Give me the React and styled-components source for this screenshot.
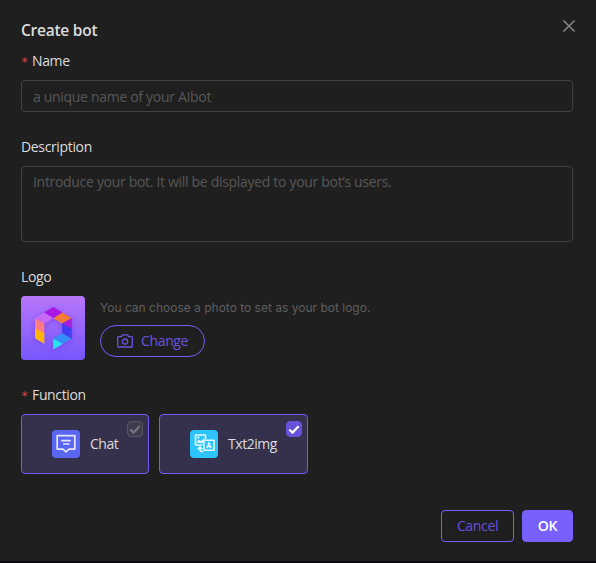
import React from "react";
import styled, { createGlobalStyle } from "styled-components";

const Global = createGlobalStyle`
  * { box-sizing: border-box; }
  html, body { margin: 0; background: #1f1f1f; }
  body { font: 14px/22px "Open Sans", "Noto Sans", sans-serif; color: #dcdcdc; overflow: hidden; }
  button, input, textarea { font: inherit; margin: 0; }
`;

const Dialog = styled.main`
  width: 596px;
  height: 563px;
  padding: 19px 23px 0 21px;
  background: #1f1f1f;
  border-bottom: 2px solid #0d0a10;
`;

const Header = styled.header`
  display: flex;
  justify-content: space-between;
  height: 31px;
`;

const Title = styled.h1`
  margin: -1px 0 0;
  font-size: 15.5px;
  line-height: 24px;
  font-weight: 600;
  letter-spacing: -0.25px;
`;

const CloseButton = styled.button`
  width: 16px;
  height: 16px;
  padding: 0;
  margin: -1px -4px 0 0;
  border: 0;
  background: none;
  color: #8c8c8c;
  svg { display: block; }
`;

const Label = styled.label`
  display: flex;
  align-items: center;
  height: 22px;
  letter-spacing: -0.35px;
`;

const Required = styled.span`
  width: 11px;
  padding-top: 2px;
  color: #dc4446;
  font: 12px/22px "DejaVu Sans Mono", monospace;
`;

const fieldStyle = `
  display: block;
  width: 100%;
  padding: 4px 11px;
  border: 1px solid #424242;
  border-radius: 4px;
  background: transparent;
  color: #dcdcdc;
  outline: none;
  resize: none;
  font-size: 14px;
  line-height: 22px;
  letter-spacing: -0.31px;
  &::placeholder { color: #575757; opacity: 1; }
`;

const TextInput = styled.input`
  ${fieldStyle}
  height: 32px;
  margin: 8px 0 24px;
`;

const TextArea = styled.textarea`
  ${fieldStyle}
  height: 76px;
  margin: 8px 0 24px;
`;

const LogoRow = styled.div`
  display: flex;
  gap: 15px;
  height: 64px;
  margin: 8px 0 24px;
`;

const LogoTile = styled.div`
  width: 64px;
  height: 64px;
  border-radius: 4px;
  overflow: hidden;
  background: linear-gradient(#b877fa, #7657fb);
  svg { display: block; }
`;

const LogoSide = styled.div`
  display: flex;
  flex-direction: column;
  align-items: flex-start;
  padding-top: 2px;
`;

const Hint = styled.p`
  margin: 0 0 7px;
  color: #5e5e5e;
  font: 12px/20px Inter, sans-serif;
`;

const ChangeButton = styled.button`
  display: flex;
  align-items: center;
  gap: 8px;
  width: 105px;
  height: 32px;
  padding: 0 0 0 16px;
  border: 1px solid #735afa;
  border-radius: 16px;
  background: transparent;
  color: #6954df;
  letter-spacing: -0.35px;
`;

const Options = styled.div`
  display: flex;
  gap: 10px;
  margin-top: 8px;
`;

const Option = styled.div`
  display: grid;
  grid-template-columns: 28px minmax(0, 1fr) 16px;
  align-items: center;
  width: ${(p) => p.$width};
  height: 60px;
  padding: 0 5px 0 30px;
  border: 1px solid #735afa;
  border-radius: 4px;
  background: #35304b;
  svg { display: block; }
`;

const OptionIcon = styled.span`
  width: 28px;
  height: 28px;
  border-radius: 4px;
  background: ${(p) => p.$color};
`;

const OptionName = styled.span`
  padding-left: 10px;
  white-space: nowrap;
  letter-spacing: -0.45px;
`;

const Check = styled.span`
  align-self: start;
  width: 16px;
  height: 16px;
  margin-top: 6px;
  border-radius: 4px;
  border: 1px solid ${(p) => (p.$on ? "#6651d8" : "#57555f")};
  background: ${(p) => (p.$on ? "#6651d8" : "#403d4f")};
  color: ${(p) => (p.$on ? "#ffffff" : "#777383")};
`;

const Footer = styled.footer`
  display: flex;
  justify-content: flex-end;
  gap: 8px;
  margin-top: 36px;
`;

const Action = styled.button`
  width: ${(p) => p.$width};
  height: 32px;
  padding: 0;
  border: 1px solid #7760fc;
  border-radius: 4px;
  background: ${(p) => (p.$primary ? "#7760fc" : "transparent")};
  color: ${(p) => (p.$primary ? "#ffffff" : "#6650db")};
  font-weight: ${(p) => (p.$primary ? 600 : 400)};
  letter-spacing: -0.35px;
`;

const CloseIcon = () => (
  <svg width="16" height="16" viewBox="0 0 16 16" fill="none" stroke="currentColor" strokeWidth="1.4">
    <path d="M2.4 2.4 13.6 13.6M13.6 2.4 2.4 13.6" />
  </svg>
);

const BotLogo = () => (
  <svg width="64" height="64" viewBox="0 0 64 64">
    <defs>
      <filter id="glow" x="-30%" y="-30%" width="160%" height="160%">
        <feDropShadow dx="0" dy="1" stdDeviation="2.5" floodColor="#6429d8" floodOpacity=".55" />
      </filter>
    </defs>
    <g filter="url(#glow)">
      <path fill="#ac18e3" d="m32.3 11 9.2 5.5-9.2 5.7-9.2-5.7z" />
      <path fill="#c66bf7" d="m23.1 16.5 9.2 5.7-9 5.3-9.3-5.3z" />
      <path fill="#f47a39" d="m41.5 16.5 9.2 5.7-9.5 5.3-8.9-5.3z" />
      <path fill="#ff7b83" d="m14 22.2 9.3 5.3v9.8L14 32z" />
      <path fill="#ffb506" d="m14 32 9.3 5.3v10.4L14 42.2z" />
      <path fill="#a51bdd" d="m50.7 22.2-9.5 5.3 9.5 5.3z" />
      <path fill="#3c3cf2" d="m41.2 27.5 9.5 5.3v9.9l-9.5-5.4z" />
      <path fill="#368ef7" d="m41.2 37.3 9.5 5.4-9.2 5.2-9.3-5.4z" />
      <path fill="#21e4ef" d="m32.2 42.5 9.3 5.4-9.3 5.6z" />
    </g>
  </svg>
);

const CameraIcon = () => (
  <svg width="16" height="14" viewBox="0 0 16 14" fill="none" stroke="currentColor" strokeWidth="1.3">
    <path d="M1.4 2.7h3L5.3.8h5.4l.9 1.9h3q.7 0 .7.7v8.9q0 .7-.7.7H1.4q-.7 0-.7-.7V3.4q0-.7.7-.7Z" />
    <circle cx="8" cy="7.6" r="2.6" />
  </svg>
);

const ChatIcon = () => (
  <svg width="28" height="28" viewBox="0 0 28 28" fill="none" stroke="#e7e5fa" strokeWidth="1.7">
    <path d="M5.2 5.7h17.6v13.5H17l-3 2.6-3-2.6H5.2zM9.3 10.7h9.4M11 14h6.5" strokeLinejoin="round" />
  </svg>
);

const ImageTextIcon = () => (
  <svg width="28" height="28" viewBox="0 0 28 28" fill="none" stroke="#e2f8ff" strokeWidth="1.6">
    <path d="M12.5 15H5.5V5h10v4.5" strokeLinejoin="round" />
    <path d="M7.2 13v-2l1.8-1.2 2 1.2 2.8-2.4V10H13v3z" fill="#e2f8ff" stroke="none" />
    <circle cx="8.4" cy="7.7" r="1.1" fill="#e2f8ff" stroke="none" />
    <path d="M13.9 10.3H24v10H13.9z" strokeLinejoin="round" />
    <path d="m16.7 18.3 2.3-5.5 2.3 5.5M17.5 16.5h3" strokeWidth="1.3" />
    <path d="m7.6 19.2 2.3-2.4 2.3 2.4M9.9 17.3v2q0 2.5 3.3 2.5" />
  </svg>
);

const Tick = () => (
  <svg width="14" height="14" viewBox="0 0 14 14" fill="none" stroke="currentColor" strokeWidth="2.2">
    <path d="m2.3 7.5 3.2 3.1 6.1-6.4" />
  </svg>
);

export default function App() {
  return (
    <>
      <Global />
      <Dialog>
        <Header>
          <Title>Create bot</Title>
          <CloseButton aria-label="Close"><CloseIcon /></CloseButton>
        </Header>
        <Label htmlFor="name"><Required>*</Required>Name</Label>
        <TextInput id="name" placeholder="a unique name of your AIbot" />
        <Label htmlFor="description">Description</Label>
        <TextArea id="description" placeholder="Introduce your bot. It will be displayed to your bot’s users." />
        <Label as="div">Logo</Label>
        <LogoRow>
          <LogoTile><BotLogo /></LogoTile>
          <LogoSide>
            <Hint>You can choose a photo to set as your bot logo.</Hint>
            <ChangeButton><CameraIcon />Change</ChangeButton>
          </LogoSide>
        </LogoRow>
        <Label as="div"><Required>*</Required>Function</Label>
        <Options>
          <Option $width="128px">
            <OptionIcon $color="#5966f2"><ChatIcon /></OptionIcon>
            <OptionName>Chat</OptionName>
            <Check><Tick /></Check>
          </Option>
          <Option $width="149px">
            <OptionIcon $color="#2dc3fb"><ImageTextIcon /></OptionIcon>
            <OptionName>Txt2img</OptionName>
            <Check $on><Tick /></Check>
          </Option>
        </Options>
        <Footer>
          <Action $width="73px">Cancel</Action>
          <Action $width="51px" $primary>OK</Action>
        </Footer>
      </Dialog>
    </>
  );
}
